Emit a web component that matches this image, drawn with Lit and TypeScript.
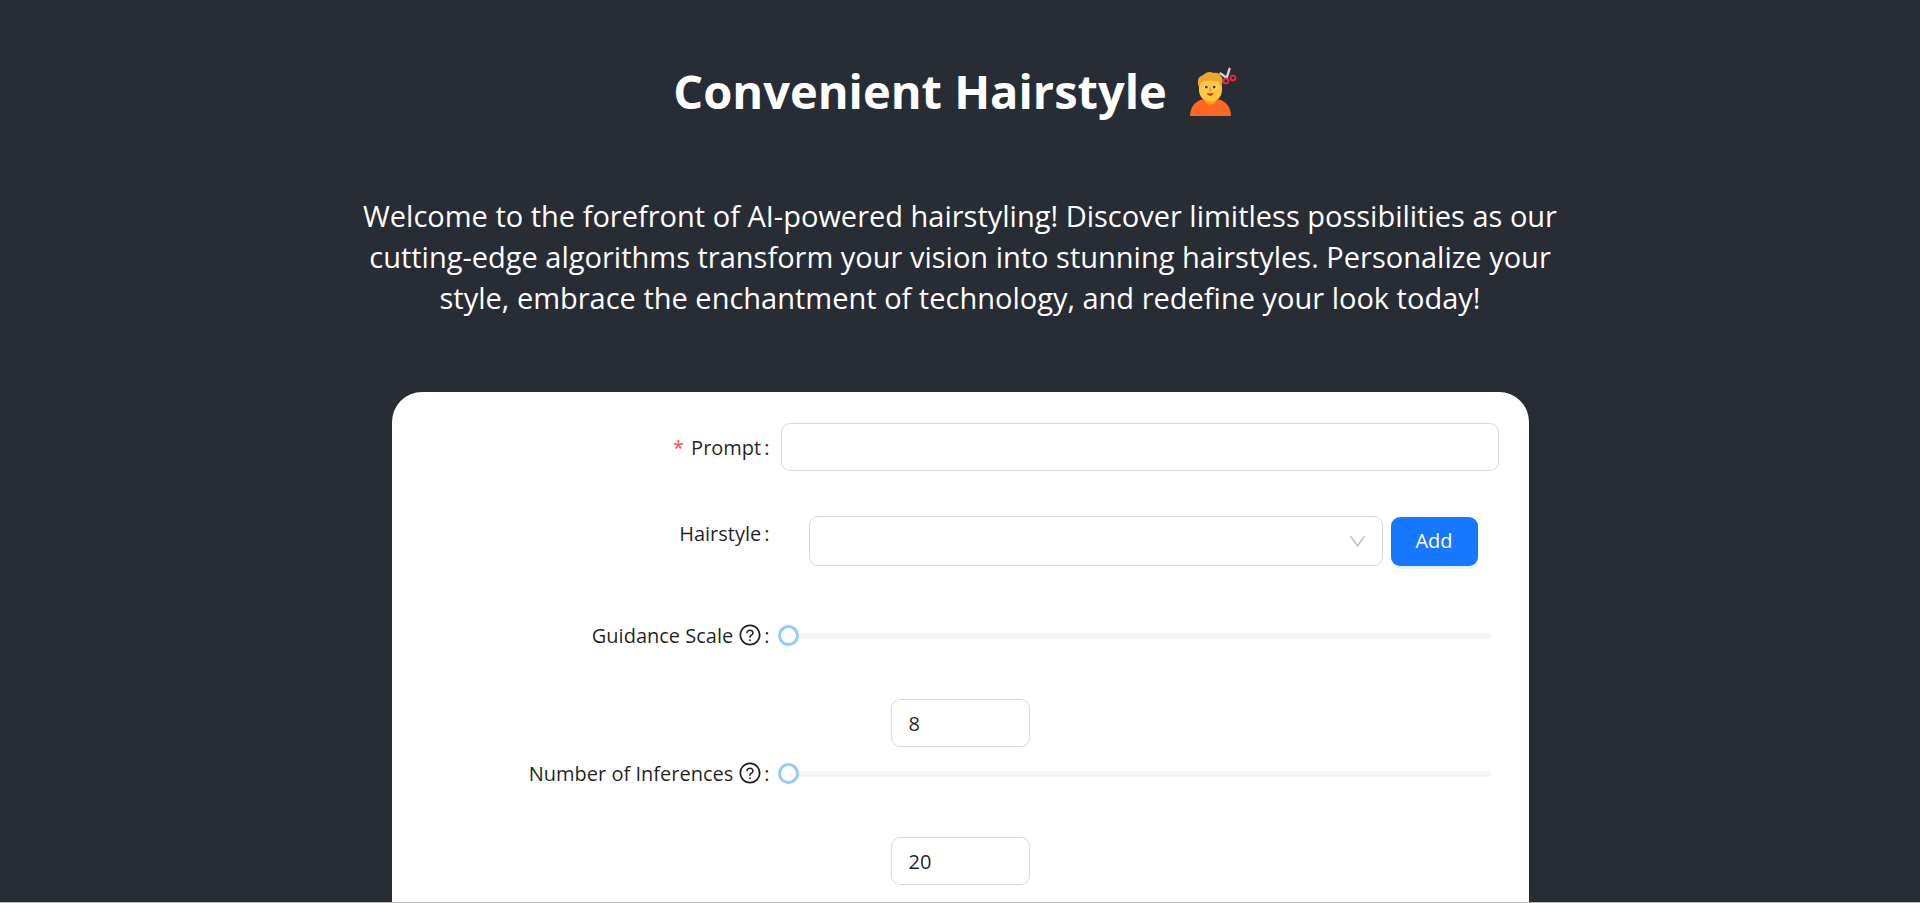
import { LitElement, html, css, svg } from "lit";
import { customElement, state } from "lit/decorators.js";

const questionIcon = svg`<path d="M512 64C264.6 64 64 264.6 64 512s200.6 448 448 448 448-200.6 448-448S759.4 64 512 64zm0 820c-205.4 0-372-166.6-372-372s166.6-372 372-372 372 166.6 372 372-166.6 372-372 372z"/><path d="M623.6 316.7C593.6 290.4 554 276 512 276s-81.6 14.5-111.6 40.7C369.2 344 352 380.7 352 420v7.6c0 4.4 3.6 8 8 8h48c4.4 0 8-3.6 8-8V420c0-44.1 43.1-80 96-80s96 35.9 96 80c0 31.1-22 59.6-56.1 72.7-21.2 8.1-39.2 22.3-52.1 40.9-13.1 19-19.9 41.8-19.9 64.9V620c0 4.4 3.6 8 8 8h48c4.4 0 8-3.6 8-8v-22.7a48.3 48.3 0 0130.9-44.8c59-22.7 97.1-74.7 97.1-132.5.1-39.3-17.1-76-48.3-103.3zM472 732a40 40 0 1080 0 40 40 0 10-80 0z"/>`;

const downIcon = svg`<path d="M884 256h-75c-5.1 0-9.9 2.5-12.9 6.6L512 654.2 227.9 262.6c-3-4.1-7.8-6.6-12.9-6.6h-75c-6.5 0-10.3 7.4-6.5 12.7l352.6 486.1c12.8 17.6 39 17.6 51.7 0l352.6-486.1c3.9-5.3.1-12.7-6.4-12.7z"/>`;

@customElement("app-root")
export class AppRoot extends LitElement {
  @state() private guidance = 8;
  @state() private inferences = 20;

  static styles = css`
    :host {
      display: flex;
      flex-direction: column;
      min-height: 100vh;
      box-sizing: border-box;
      border-bottom: 1px solid #bbbbbb;
      background: #282c34;
      color: #ffffff;
      font-family: "Segoe UI", "Open Sans", "Noto Sans", sans-serif;
    }
    *, *::before, *::after { box-sizing: border-box; }
    .intro {
      display: flex;
      flex-direction: column;
      align-items: center;
      padding: 55px 24px 74px;
      gap: 68px;
    }
    .title {
      display: flex;
      align-items: center;
      gap: 22px;
      margin: 0;
      font-size: 47px;
      line-height: 72px;
      font-weight: 700;
    }
    .emoji { width: 58px; height: 50px; display: block; }
    .lead {
      margin: 0;
      max-width: 1230px;
      font-size: 29px;
      line-height: 41px;
      text-align: center;
    }
    .card {
      flex: 1;
      align-self: center;
      width: 100%;
      max-width: 1137px;
      padding: 31px 30px 15px;
      border-radius: 30px 30px 0 0;
      background: #ffffff;
      color: rgba(0, 0, 0, 0.88);
      font-size: 20px;
    }
    .row {
      display: grid;
      grid-template-columns: 1fr 2fr;
      height: 48px;
      margin-bottom: 38px;
    }
    .row.tall { height: 64px; }
    .row.tight { margin-bottom: 40px; }
    .label {
      display: flex;
      align-items: center;
      justify-content: flex-end;
      height: 48px;
      padding-right: 11px;
      white-space: nowrap;
    }
    .label::after { content: ":"; margin-left: 3px; }
    .required::before {
      content: "*";
      margin-right: 7px;
      color: #ff4d4f;
    }
    .help { width: 24px; height: 24px; margin-left: 5px; fill: currentColor; }
    .help-label::after { margin-left: 2px; }
    .box {
      width: 100%;
      height: 48px;
      padding: 0 17px;
      border: 1px solid #d9d9d9;
      border-radius: 9px;
      background: #ffffff;
      color: inherit;
      font: inherit;
      outline: none;
      appearance: none;
    }
    .box:focus { border-color: #1677ff; }
    .picker {
      display: flex;
      align-items: flex-end;
      gap: 8px;
      padding: 7px 21px 7px 28px;
    }
    .select { position: relative; flex: 1; height: 50px; }
    .select .box { height: 50px; display: block; }
    .arrow {
      position: absolute;
      right: 15px;
      top: 15px;
      width: 21px;
      height: 21px;
      fill: rgba(0, 0, 0, 0.25);
      pointer-events: none;
    }
    .add {
      min-width: 87px;
      height: 49px;
      padding: 0 16px 2px;
      border: 0;
      border-radius: 9px;
      background: #1677ff;
      box-shadow: 0 3px 0 rgba(5, 145, 255, 0.1);
      color: #ffffff;
      font: inherit;
      cursor: pointer;
    }
    .rail { display: flex; align-items: center; height: 50px; padding-right: 8px; }
    .slider {
      flex: 1;
      min-width: 0;
      height: 21px;
      margin: 0 0 0 -3px;
      background: none;
      appearance: none;
      cursor: pointer;
    }
    .slider::-webkit-slider-runnable-track {
      height: 6px;
      border-radius: 3px;
      background: #f5f5f5;
    }
    .slider::-webkit-slider-thumb {
      appearance: none;
      width: 21px;
      height: 21px;
      margin-top: -8px;
      border: 3px solid #91caff;
      border-radius: 50%;
      background: #ffffff;
    }
    .number {
      display: block;
      width: 139px;
      margin: 0 auto 2px;
      appearance: textfield;
    }
    .number::-webkit-inner-spin-button { appearance: none; margin: 0; }
  `;

  private sliderField(id: string, label: string, min: number, max: number, value: number, update: (n: number) => void) {
    const onInput = (e: Event) => update(Number((e.target as HTMLInputElement).value));
    return html`
      <div class="row tight">
        <label class="label help-label" for=${id}>${label}<svg class="help" viewBox="0 0 1024 1024" aria-hidden="true">${questionIcon}</svg></label>
        <div class="rail">
          <input class="slider" id=${id} type="range" min=${min} max=${max} .value=${String(value)} @input=${onInput} />
        </div>
      </div>
      <input class="box number" type="number" aria-label=${label} min=${min} max=${max} .value=${String(value)} @change=${onInput} />
    `;
  }

  render() {
    return html`
      <header class="intro">
        <h1 class="title">
          Convenient Hairstyle
          <svg class="emoji" viewBox="0 -2 58 50" aria-hidden="true">
            <path d="M1 48C1 38 8 31 17 31h9c9 0 16 7 16 17z" fill="#ff6723"/>
            <path d="M16 28h11v4c0 3-3 4.500-5.500 4.500S16 35 16 32z" fill="#f4a51c"/>
            <path d="M10 14c0-6 4-8 11.500-8S33 8 33 14v8c0 7-5 11.500-11.500 11.500S10 29 10 22z" fill="#ffc83d"/>
            <path d="M10 19c-1.500-3-1.500-8 .5-10 2-1 3-1 4-2 2-3 7-4 10-2 4-1 7 1 7 3 2 1 3 5 1.500 8l-.5 3c-2-1.500-2-4-3-6-3 .8-5 .3-8-.7-3 1.500-6 .7-8 1.200-2 1-2.500 3-3.500 5.500z" fill="#efa52b"/>
            <ellipse cx="17" cy="19" rx="2.300" ry="1.800" fill="#fff"/>
            <ellipse cx="25.500" cy="19" rx="2.300" ry="1.800" fill="#fff"/>
            <circle cx="17.300" cy="19" r="1.500" fill="#5a3326"/>
            <circle cx="25.200" cy="19" r="1.500" fill="#5a3326"/>
            <path d="M21.300 19.500v2.500M20.300 22.600h2" stroke="#f08a1c" stroke-width="1.400" fill="none"/>
            <path d="M18 25c2 .8 4.500 .8 6.500 0-.5 3.500-6 3.500-6.500 0z" fill="#c3203b"/>
            <path d="M31.500 5.500l6.500 4.500M40.500.8l-2.800 9.200" stroke="#d5d3d9" stroke-width="2.400" stroke-linecap="round"/>
            <circle cx="37" cy="13" r="2.400" fill="none" stroke="#f0283c" stroke-width="1.900"/>
            <circle cx="44" cy="10" r="2.400" fill="none" stroke="#f0283c" stroke-width="1.900"/>
          </svg>
        </h1>
        <p class="lead">
          Welcome to the forefront of AI-powered hairstyling! Discover limitless possibilities as our
          cutting-edge algorithms transform your vision into stunning hairstyles. Personalize your
          style, embrace the enchantment of technology, and redefine your look today!
        </p>
      </header>
      <form class="card" @submit=${(e: Event) => e.preventDefault()}>
        <div class="row">
          <label class="label required" for="prompt">Prompt</label>
          <input class="box" id="prompt" type="text" required />
        </div>
        <div class="row tall">
          <label class="label" for="hairstyle">Hairstyle</label>
          <div class="picker">
            <div class="select">
              <select class="box" id="hairstyle"><option value=""></option></select>
              <svg class="arrow" viewBox="0 0 1024 1024" aria-hidden="true">${downIcon}</svg>
            </div>
            <button class="add" type="button">Add</button>
          </div>
        </div>
        ${this.sliderField("guidance", "Guidance Scale", 8, 20, this.guidance, (n) => (this.guidance = n))}
        ${this.sliderField("inferences", "Number of Inferences", 20, 100, this.inferences, (n) => (this.inferences = n))}
      </form>
    `;
  }
}
